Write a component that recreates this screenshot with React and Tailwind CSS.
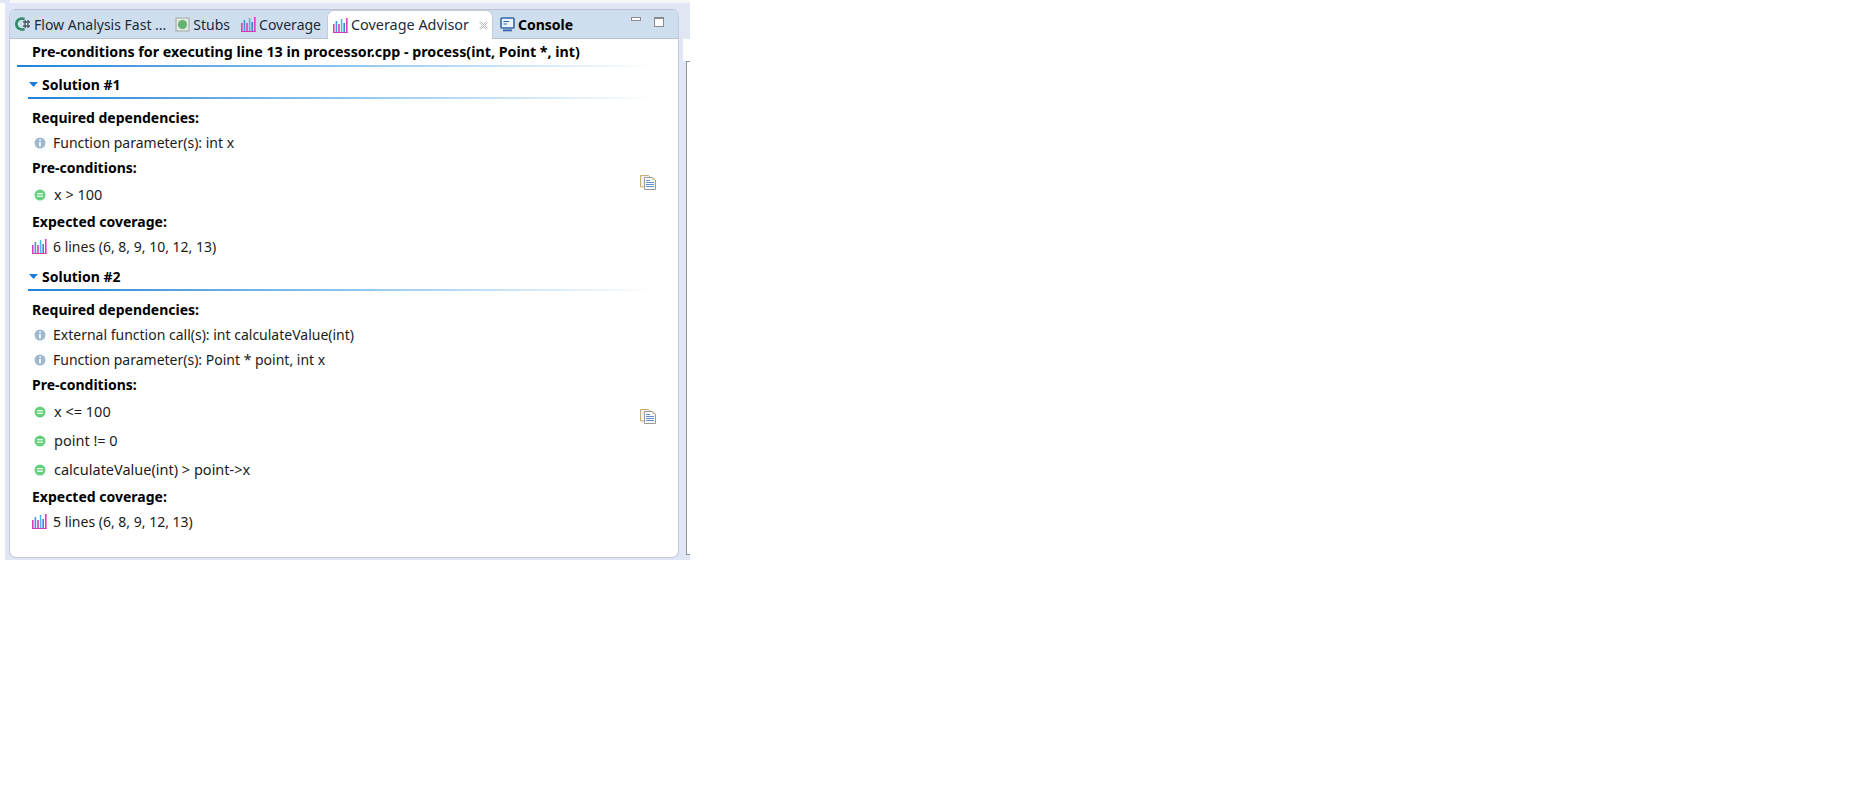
const FONT = "font-['Noto_Sans','Open_Sans',sans-serif]";

const CoverageIcon = () => (
  <svg width="15" height="15" viewBox="0 0 15 15" className="shrink-0">
    <rect x="0" y="6" width="1.6" height="9" fill="#d63fbe" />
    <rect x="2.6" y="3" width="1.6" height="12" fill="#3f95e6" />
    <rect x="5.2" y="6" width="1.6" height="9" fill="#d63fbe" />
    <rect x="7.8" y="1" width="1.6" height="14" fill="#4fb6e8" />
    <rect x="10.4" y="5" width="1.6" height="10" fill="#3f7fd8" />
    <rect x="13" y="0" width="1.6" height="15" fill="#d63fbe" />
    <rect x="0" y="14" width="14.6" height="1" fill="#cf3cbc" />
  </svg>
);

const InfoIcon = () => (
  <svg width="12" height="12" viewBox="0 0 12 12" className="shrink-0">
    <circle cx="6" cy="6" r="5.5" fill="#9db8cf" />
    <rect x="5.3" y="2.4" width="1.6" height="1.5" fill="#fff" />
    <rect x="5.1" y="5" width="1.7" height="4.4" fill="#fff" />
  </svg>
);

const GreenIcon = () => (
  <svg width="12" height="12" viewBox="0 0 12 12" className="shrink-0">
    <circle cx="6" cy="6" r="5.5" fill="#66d07e" />
    <rect x="3" y="4" width="6" height="1.3" fill="#e6f8ea" />
    <rect x="3" y="6.6" width="6" height="1.3" fill="#e6f8ea" />
  </svg>
);

const CopyIcon = () => (
  <svg width="16" height="15" viewBox="0 0 16 15">
    <path d="M0.5 0.5H8.5L10 2V12H0.5Z" fill="#eef2f6" stroke="#c9ad6a" />
    <path d="M4.5 2.5H12.5L15.5 5V14.5H4.5Z" fill="#fdfdfd" stroke="#9a9a9a" />
    <path d="M12.5 2.5L15.5 5H12.5Z" fill="#d8bf85" />
    <path d="M6 5.5H10M6 7.5H14M6 9.5H14M6 11.5H14" stroke="#5f8fd0" strokeWidth="1" />
  </svg>
);

const Tab = ({ icon, label, bold, className = "pl-[5px] pr-[4px]" }) => (
  <div className={`flex items-center h-full gap-[3px] ${className}`}>
    {icon}
    <span className={bold ? "font-bold text-black" : "text-[#1c2b3a]"}>{label}</span>
  </div>
);

const Title = ({ children }) => (
  <div className="h-[25px] flex items-center pl-[22px] text-[14px] font-bold text-black">{children}</div>
);

const Row = ({ icon, h = "h-[25px]", size = "text-[14px]", gap = "gap-[7px]", children }) => (
  <div className={`${h} flex items-center pl-[24px] ${gap} ${size} text-[#1b1b1b]`}>
    {icon}
    <span>{children}</span>
  </div>
);

const Rule = ({ className }) => (
  <div className={`h-[2px] bg-gradient-to-r from-[#1a82d8] via-[#8cc4ee] to-white ${className}`} />
);

const SolutionHead = ({ children }) => (
  <div className="mx-[18px]">
    <div className="h-[26px] flex items-center gap-[4px] pl-[1px] text-[14px] font-bold text-black">
      <svg width="9" height="5" viewBox="0 0 9 5"><path d="M0 0H9L4.5 5Z" fill="#1a7ad4" /></svg>
      {children}
    </div>
    <Rule className="w-[628px]" />
  </div>
);

const Solution = ({ name, deps, conds, coverage, copyTop }) => (
  <div className="relative">
    <SolutionHead>{name}</SolutionHead>
    <div className="pt-[6px]">
      <Title>Required dependencies:</Title>
      {deps.map((d) => <Row key={d} icon={<InfoIcon />}>{d}</Row>)}
      <Title>Pre-conditions:</Title>
      {conds.map((c) => <Row key={c} h="h-[29px]" size="text-[14.5px]" gap="gap-[8px]" icon={<GreenIcon />}>{c}</Row>)}
      <Title>Expected coverage:</Title>
      <Row gap="gap-[6px]" size="text-[14px]" icon={<span className="-ml-[2px]"><CoverageIcon /></span>}>{coverage}</Row>
    </div>
    <div className={`absolute left-[630px] ${copyTop}`}><CopyIcon /></div>
  </div>
);

export default function App() {
  return (
    <div className={`${FONT} w-full min-h-[810px] bg-white`}>
      <div className="w-[690px] h-[560px] bg-[#e1e6f6] flex flex-col">
        <div className="h-[3px] shrink-0 ml-[10px] bg-[#f7f7fa]" />
        <div className="flex flex-1 min-h-0">
          <div className="w-[5px] shrink-0 bg-white" />
          <div className="flex flex-1 pt-[6px] pl-[4px]">
            <div className="w-[670px] h-[549px] rounded-[7px] border border-[#c3cbd8] border-t-[#b9c3d2] bg-white overflow-hidden flex flex-col">
              <div className="h-[29px] shrink-0 bg-[#cfdeee] flex items-stretch text-[14px] border-b border-b-[#b5c2d2] relative">
                <Tab
                  label="Flow Analysis Fast ..."
                  icon={
                    <svg width="16" height="16" viewBox="0 0 16 16" className="shrink-0">
                      <path d="M9.5 3.2A5.5 5.5 0 1 0 9.5 12.8" fill="none" stroke="#2f8a6a" strokeWidth="2.6" />
                      <path d="M8 6h7M8 10h7M10 4v8M13 4v8" stroke="#4a5a60" strokeWidth="1.3" />
                    </svg>
                  }
                />
                <Tab
                  label="Stubs"
                  icon={
                    <svg width="15" height="15" viewBox="0 0 15 15" className="shrink-0">
                      <rect x="1" y="1" width="13" height="13" fill="#e3e8e3" stroke="#9fa8a0" />
                      <circle cx="7.5" cy="7.5" r="4.5" fill="#62b372" />
                    </svg>
                  }
                />
                <Tab label="Coverage" className="pl-[7px] pr-[6px]" icon={<CoverageIcon />} />
                <div className="h-[29px] w-[166px] bg-white rounded-t-[7px] border-t border-x border-[#c3cbd8] flex items-center gap-[3px] pl-[5px] -mb-px">
                  <CoverageIcon />
                  <span className="text-[14.4px] text-[#1c2b3a]">Coverage Advisor</span>
                  <svg width="9" height="9" viewBox="0 0 9 9" className="ml-[7px]">
                    <path d="M1 1L8 8M8 1L1 8" stroke="#b4b4b4" strokeWidth="2" />
                    <path d="M1 1L8 8M8 1L1 8" stroke="#fff" strokeWidth="1" />
                  </svg>
                </div>
                <Tab
                  bold
                  label="Console"
                  className="pl-[7px] pr-[4px]"
                  icon={
                    <svg width="15" height="15" viewBox="0 0 15 15" className="shrink-0">
                      <rect x="1" y="1" width="13" height="10" rx="1" fill="#eef3f9" stroke="#2f65a8" strokeWidth="1.6" />
                      <path d="M3.5 4.5H9M3.5 7H7" stroke="#2f65a8" />
                      <rect x="3" y="12.5" width="9" height="1.8" fill="#2f65a8" />
                    </svg>
                  }
                />
                <div className="ml-auto flex items-start pt-[7px] gap-[13px] pr-[14px]">
                  <div className="w-[10px] h-[4px] border border-[#8a8a8a] bg-white" />
                  <div className="w-[10px] h-[10px] border border-[#8a8a8a] border-t-2 bg-white" />
                </div>
              </div>

              <div className="mx-[7px]">
                <div className="h-[26px] flex items-center pl-[15px] text-[14.25px] font-bold text-black">
                  Pre-conditions for executing line 13 in processor.cpp - process(int, Point *, int)
                </div>
                <Rule className="w-[640px]" />
              </div>

              <div className="mt-[4px] pb-[4px]">
                <Solution
                  name="Solution #1"
                  deps={["Function parameter(s): int x"]}
                  conds={["x > 100"]}
                  coverage="6 lines (6, 8, 9, 10, 12, 13)"
                  copyTop="top-[104px]"
                />
              </div>
              <Solution
                name="Solution #2"
                deps={["External function call(s): int calculateValue(int)", "Function parameter(s): Point * point, int x"]}
                conds={["x <= 100", "point != 0", "calculateValue(int) > point->x"]}
                coverage="5 lines (6, 8, 9, 12, 13)"
                copyTop="top-[146px]"
              />
            </div>
            <div className="ml-[4px] flex-1 h-[549px] flex flex-col">
              <div className="h-[29px] bg-[#dfe8f2] rounded-tl-[5px] mt-[1px]" />
              <div className="h-[22px] bg-white" />
              <div className="flex-1 ml-[3px] bg-white border-l border-t border-b border-[#8d9299] mb-[3px]" />
            </div>
          </div>
        </div>
      </div>
    </div>
  );
}
